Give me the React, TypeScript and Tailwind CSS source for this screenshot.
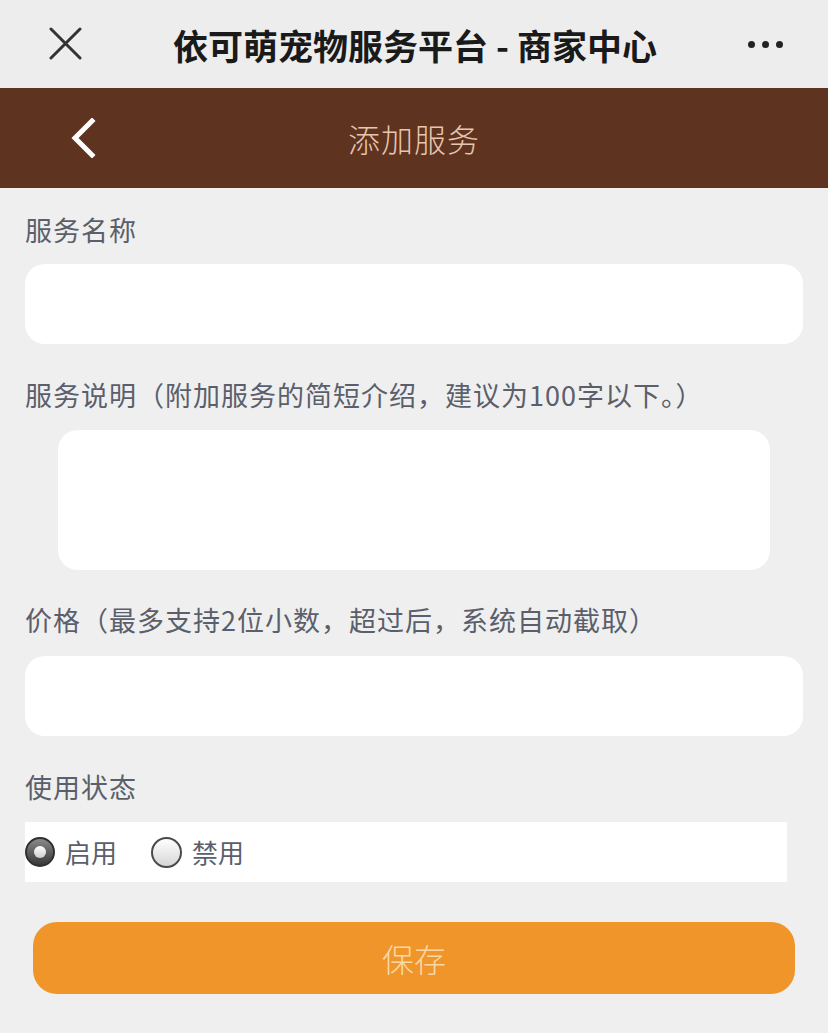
import React from "react";

const FONT = { fontFamily: '"Noto Sans CJK SC", "Noto Sans", sans-serif' };

function Label({ children }: { children: React.ReactNode }) {
  return (
    <div className="px-[25px] text-[27px] leading-[36px] text-[#5b5f6c] tracking-[1px]">
      {children}
    </div>
  );
}

function Radio({ checked, label }: { checked?: boolean; label: string }) {
  return (
    <div className="flex items-center gap-[10px]">
      {checked ? (
        <span className="flex h-[30px] w-[30px] items-center justify-center rounded-full border-2 border-[#2f2f2f] bg-gradient-to-b from-[#8a8a8a] to-[#3a3a3a]">
          <span className="h-[12px] w-[12px] rounded-full bg-gradient-to-b from-[#ffffff] to-[#cfcfcf]" />
        </span>
      ) : (
        <span className="h-[31px] w-[31px] rounded-full border-2 border-[#4a4a4a] bg-gradient-to-b from-[#ffffff] to-[#d6d6d6]" />
      )}
      <span className="text-[26px] leading-none text-[#5b5f6c]">{label}</span>
    </div>
  );
}

export default function App() {
  return (
    <div className="min-h-[1033px] w-full bg-[#efefef]" style={FONT}>
      {/* WeChat top bar */}
      <div className="flex h-[88px] items-center bg-[#ededed] pl-[48px] pr-[45px]">
        <svg width="34" height="34" viewBox="0 0 34 34" className="shrink-0">
          <path d="M3 2 L32 31 M32 2 L3 31" stroke="#333" strokeWidth="3" strokeLinecap="round" />
        </svg>
        <div className="flex-1 text-center text-[35px] font-bold text-[#1a1a1a] leading-none">
          依可萌宠物服务平台 - 商家中心
        </div>
        <div className="flex shrink-0 items-center gap-[7px]">
          <span className="h-[7px] w-[7px] rounded-full bg-[#222]" />
          <span className="h-[7px] w-[7px] rounded-full bg-[#222]" />
          <span className="h-[7px] w-[7px] rounded-full bg-[#222]" />
        </div>
      </div>

      {/* Page header */}
      <div className="relative flex h-[100px] items-center justify-center bg-[#5e3320]">
        <svg width="30" height="40" viewBox="0 0 30 40" className="absolute left-[68px] top-[30px]">
          <path d="M24 3 L7 20 L24 37" fill="none" stroke="#fff" strokeWidth="5" strokeLinecap="square" />
        </svg>
        <span className="text-[32px] font-light text-[#e6c6ae] tracking-[1px]">添加服务</span>
      </div>

      <div className="pt-[24px]">
        <Label>服务名称</Label>
        <div className="mx-[25px] mt-[16px] h-[80px] rounded-[20px] bg-white" />

        <div className="mt-[33px]">
          <Label>服务说明（附加服务的简短介绍，建议为100字以下。）</Label>
        </div>
        <div className="mx-[58px] mt-[17px] h-[140px] rounded-[20px] bg-white" />

        <div className="mt-[32px]">
          <Label>价格（最多支持2位小数，超过后，系统自动截取）</Label>
        </div>
        <div className="mx-[25px] mt-[18px] h-[80px] rounded-[20px] bg-white" />

        <div className="mt-[33px]">
          <Label>使用状态</Label>
        </div>
        <div className="ml-[25px] mr-[41px] mt-[17px] flex h-[60px] items-center gap-[34px] bg-white">
          <Radio checked label="启用" />
          <Radio label="禁用" />
        </div>

        <div className="mx-[33px] mt-[40px] flex h-[72px] items-center justify-center rounded-[24px] bg-[#ef952a]">
          <span className="text-[32px] font-light text-[#fcd7a6]">保存</span>
        </div>
      </div>
    </div>
  );
}
